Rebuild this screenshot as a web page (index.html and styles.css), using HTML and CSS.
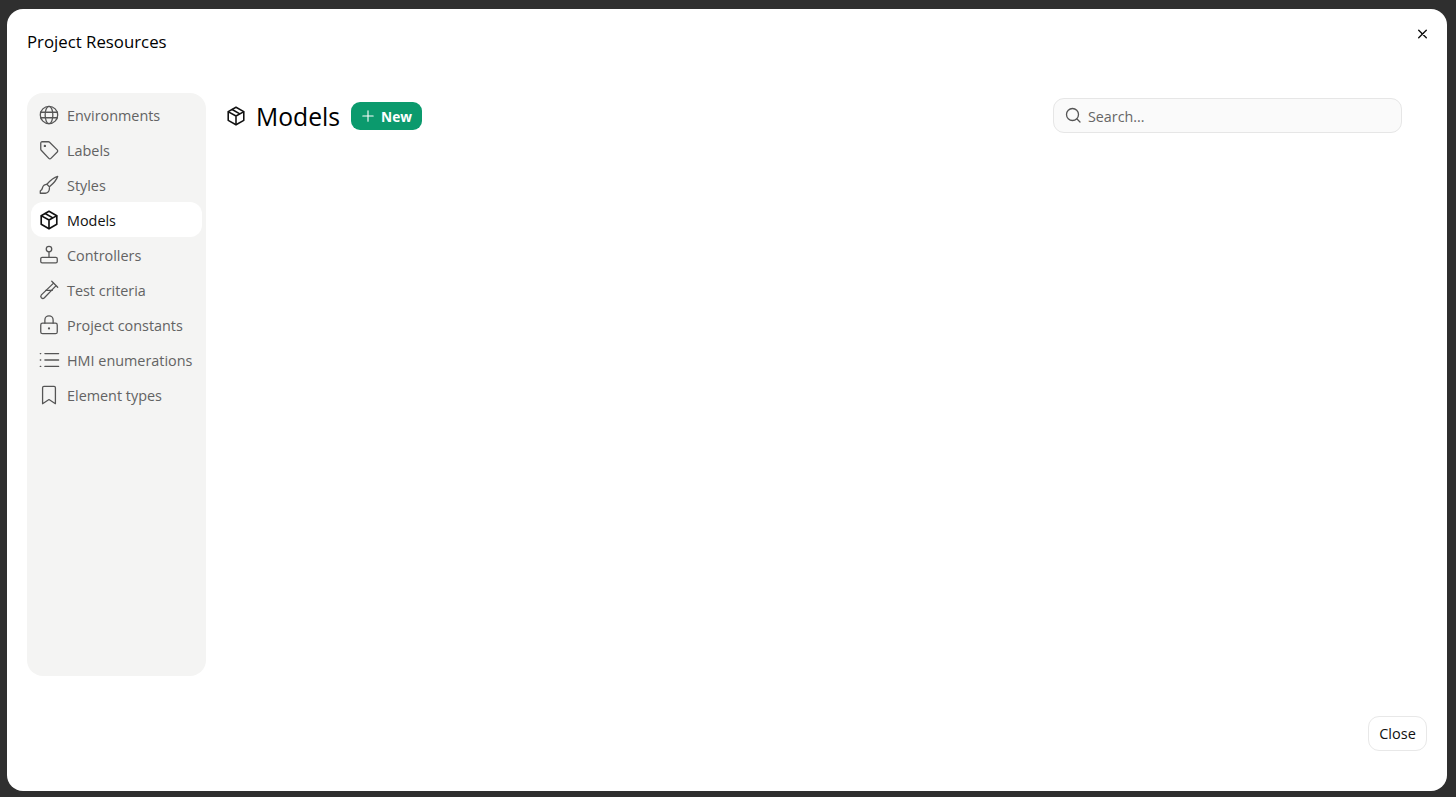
FILE: index.html
```html
<!DOCTYPE html>
<html>
<head>
  <title>Project Resources</title>
  <link rel="stylesheet" href="styles.css">
</head>
<body>
  <div class="modal">
    <div class="modal-header">
      <h2 class="modal-title">Project Resources</h2>
      <button type="button" class="modal-x" aria-label="Close">
        <svg width="16" height="16" viewBox="0 0 16 16" fill="none" stroke="#111" stroke-width="1.4" stroke-linecap="round"><path d="M3.700 4.200l7.600 7.600M11.300 4.200l-7.600 7.600"/></svg>
      </button>
    </div>

    <div class="modal-body">
      <div class="side-nav">
        <a class="nav-item">
          <svg class="nav-icon" viewBox="0 0 24 24"><circle cx="12" cy="12" r="9.500"/><ellipse cx="12" cy="12" rx="4.200" ry="9.500"/><path d="M2.800 9h18.400M2.800 15h18.400"/></svg>
          <span>Environments</span>
        </a>
        <a class="nav-item">
          <svg class="nav-icon" viewBox="0 0 24 24"><path d="M3 4.500A1.500 1.500 0 0 1 4.500 3h6.900c.5 0 .9.2 1.200.5l8.400 8.400a1.600 1.600 0 0 1 0 2.300l-6.900 6.900a1.600 1.600 0 0 1-2.300 0L3.500 12.300a1.700 1.700 0 0 1-.5-1.200z"/><circle cx="7.500" cy="7.500" r=".6"/></svg>
          <span>Labels</span>
        </a>
        <a class="nav-item">
          <svg class="nav-icon" viewBox="0 0 24 24"><path d="M21.500 2.500c-.9 3.300-5.500 8.500-9 11.500l-2.800-2.800c3-3.500 8.400-7.900 11.800-8.700z"/><path d="M9.700 11.200c-2.700.1-4.200 1.300-4.700 3.500-.4 1.700-.6 3-2.500 3.800v2.500h5.500c3 0 4.600-2.500 4.500-6"/></svg>
          <span>Styles</span>
        </a>
        <a class="nav-item active">
          <svg class="nav-icon" viewBox="0 0 24 24"><path d="M12 2.500l8.500 4.800v9.400L12 21.500l-8.500-4.800V7.300z"/><path d="M3.800 7.500L12 12l8.200-4.500M12 12v9.300M7.800 4.900l8.400 4.800"/></svg>
          <span>Models</span>
        </a>
        <a class="nav-item">
          <svg class="nav-icon" viewBox="0 0 24 24"><circle cx="12" cy="5.500" r="3"/><path d="M12 8.500v6"/><path d="M4.500 14.500h15A1.500 1.500 0 0 1 21 16v3a1.500 1.500 0 0 1-1.500 1.500h-15A1.500 1.500 0 0 1 3 19v-3a1.500 1.500 0 0 1 1.500-1.500z"/></svg>
          <span>Controllers</span>
        </a>
        <a class="nav-item">
          <svg class="nav-icon" viewBox="0 0 24 24"><path d="M15 2.500l6.500 6.500"/><path d="M17 4.500L3.700 17.300a2.400 2.400 0 0 0 0 3.200 2.400 2.400 0 0 0 3.300 0L19.500 7.500"/><path d="M8.500 12.500h7"/></svg>
          <span>Test criteria</span>
        </a>
        <a class="nav-item">
          <svg class="nav-icon" viewBox="0 0 24 24"><rect x="3" y="10" width="18" height="11.500" rx="2"/><path d="M7.500 10V6.500a4.500 4.500 0 0 1 9 0V10"/><circle class="dot" cx="12" cy="15.700" r="1.200"/></svg>
          <span>Project constants</span>
        </a>
        <a class="nav-item">
          <svg class="nav-icon" viewBox="0 0 24 24"><path d="M7.500 5h15M7.500 12h15M7.500 19h15M2.500 5h.5M2.500 12h.5M2.500 19h.5"/></svg>
          <span>HMI enumerations</span>
        </a>
        <a class="nav-item">
          <svg class="nav-icon" viewBox="0 0 24 24"><path d="M6.500 2.500h11A1.500 1.500 0 0 1 19 4v17.500l-7-4.500-7 4.500V4a1.500 1.500 0 0 1 1.500-1.500z"/></svg>
          <span>Element types</span>
        </a>
      </div>

      <div class="content">
        <div class="content-head">
          <svg class="head-icon" viewBox="0 0 24 24"><path d="M12 2.500l8.500 4.800v9.400L12 21.500l-8.500-4.800V7.300z"/><path d="M3.800 7.500L12 12l8.200-4.500M12 12v9.300M7.800 4.900l8.400 4.800"/></svg>
          <h1 class="content-title">Models</h1>
          <button type="button" class="btn-new">
            <svg width="14" height="14" viewBox="0 0 14 14" fill="none" stroke="#fff" stroke-width="1.100" stroke-linecap="round"><path d="M7 1.800v10.400M1.800 7h10.400"/></svg>
            New
          </button>
          <div class="search">
            <svg width="18" height="18" viewBox="0 0 18 18" fill="none" stroke="#555" stroke-width="1.300" stroke-linecap="round"><circle cx="8.500" cy="8.500" r="6"/><path d="M13 13l3 3"/></svg>
            <span>Search...</span>
          </div>
        </div>
      </div>
    </div>

    <div class="modal-footer">
      <button type="button" class="btn-close">Close</button>
    </div>
  </div>
</body>
</html>
```

FILE: styles.css
```css
body {
  margin: 0;
  height: 797px;
  box-sizing: border-box;
  padding: 9px 9px 6px 7px;
  background-color: #2f2f2f;
  font-family: "Open Sans", "Noto Sans", Arial, sans-serif;
  overflow: hidden;
}

.modal {
  height: 100%;
  display: flex;
  flex-direction: column;
  background-color: #fff;
  border-radius: 16px;
}

.modal-header {
  display: flex;
  justify-content: space-between;
  align-items: flex-start;
  height: 84px;
  padding: 0 16px 0 20px;
}

.modal-title {
  margin: 21px 0 0;
  font-size: 16.800px;
  line-height: 24px;
  font-weight: 500;
  color: #000;
}

.modal-x {
  margin-top: 17px;
  padding: 0;
  width: 16px;
  height: 16px;
  border: none;
  background: none;
}

.modal-body {
  display: flex;
  height: 583px;
  padding: 0 45px 0 20px;
}

.side-nav {
  width: 179px;
  box-sizing: border-box;
  padding: 4px;
  background-color: #f4f4f3;
  border-radius: 16px;
}

.nav-item {
  display: flex;
  align-items: center;
  gap: 7px;
  height: 35px;
  padding-left: 7px;
  border-radius: 12px;
  font-size: 14.400px;
  font-weight: 500;
  color: #636363;
  white-space: nowrap;
}

.nav-item span {
  padding-top: 2px;
}

.nav-item.active {
  background-color: #fff;
  color: #111;
}

.nav-icon {
  width: 22px;
  height: 22px;
  flex: none;
  fill: none;
  stroke: #555;
  stroke-width: 1.400;
  stroke-linecap: round;
  stroke-linejoin: round;
}

.nav-item.active .nav-icon {
  stroke: #111;
  stroke-width: 1.800;
}

.nav-icon .dot {
  fill: #555;
  stroke: none;
}

.content {
  flex: 1;
  padding: 9px 0 0 21px;
}

.content-head {
  display: flex;
  align-items: center;
  height: 28px;
}

.head-icon {
  width: 22px;
  height: 22px;
  flex: none;
  margin: 0 9px 0 -2px;
  fill: none;
  stroke: #111;
  stroke-width: 1.700;
  stroke-linecap: round;
  stroke-linejoin: round;
}

.content-title {
  margin: 0 11px 0 0;
  padding-top: 1px;
  font-size: 24.700px;
  font-weight: 500;
  line-height: 28px;
  color: #000;
}

.btn-new {
  display: flex;
  align-items: center;
  gap: 6px;
  height: 28px;
  padding: 0 10px;
  border: none;
  border-radius: 9px;
  background-color: #0b9a6d;
  color: #fff;
  font-family: inherit;
  font-size: 13.700px;
  font-weight: 700;
}

.search {
  display: flex;
  align-items: center;
  gap: 6px;
  width: 349px;
  height: 35px;
  box-sizing: border-box;
  margin: -2px 0 0 auto;
  padding-left: 10px;
  border: 1px solid #e6e6e6;
  border-radius: 11px;
  background-color: #fafafa;
  font-size: 14.300px;
  color: #666;
}

.search span {
  padding-top: 2px;
}

.modal-footer {
  display: flex;
  justify-content: flex-end;
  padding: 40px 20px 0 0;
}

.btn-close {
  width: 59px;
  height: 35px;
  padding: 0;
  border: 1px solid #e8e8e8;
  border-radius: 11px;
  background-color: #fff;
  color: #111;
  font-family: inherit;
  font-size: 14.500px;
  font-weight: 500;
}
```
